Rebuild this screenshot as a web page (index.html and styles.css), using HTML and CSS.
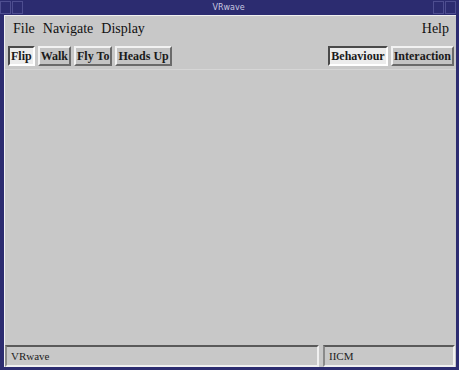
FILE: index.html
```html
<!DOCTYPE html>
<html lang="en">
<head>
    <meta charset="UTF-8">
    <title>VRwave</title>
    <link rel="stylesheet" href="styles.css">
</head>
<body>
    <div class="window">
        <div class="titlebar">
            <div class="tb-btns"><span class="tb-btn"></span><span class="tb-btn"></span></div>
            <span class="title">VRwave</span>
            <div class="tb-btns"><span class="tb-btn"></span><span class="tb-btn"></span></div>
        </div>
        <div class="client">
            <div class="menubar">
                <span class="menu">File</span>
                <span class="menu">Navigate</span>
                <span class="menu">Display</span>
                <span class="menu help">Help</span>
            </div>
            <div class="toolbar">
                <div class="group">
                    <button class="btn on">Flip</button>
                    <button class="btn">Walk</button>
                    <button class="btn">Fly To</button>
                    <button class="btn">Heads Up</button>
                </div>
                <div class="group">
                    <button class="btn on">Behaviour</button>
                    <button class="btn">Interaction</button>
                </div>
            </div>
            <div class="viewport"></div>
            <div class="statusbar">
                <div class="field wide">VRwave</div>
                <div class="field">IICM</div>
            </div>
        </div>
    </div>
</body>
</html>
```

FILE: styles.css
```css
body {
    margin: 0;
    background-color: #2c2c70;
    font-family: 'Liberation Serif', 'DejaVu Serif', serif;
}
.window {
    width: 459px;
    height: 370px;
    display: flex;
    flex-direction: column;
    box-sizing: border-box;
    padding: 0 3px 3px 4px;
    background-color: #2c2c70;
}
.titlebar {
    height: 14px;
    display: flex;
    align-items: center;
    justify-content: space-between;
    margin-left: -4px;
    margin-right: -1px;
}
.title {
    color: #c8c8e0;
    font-family: 'DejaVu Sans', sans-serif;
    font-size: 8px;
}
.tb-btns {
    display: flex;
}
.tb-btn {
    width: 9px;
    height: 11px;
    border: 1px solid #4e4e90;
    margin-right: 1px;
}
.client {
    flex: 1;
    display: flex;
    flex-direction: column;
    background-color: #c8c8c8;
    border-top: 1px solid #f0f0f0;
    border-left: 1px solid #f0f0f0;
    margin-top: 1px;
}
.menubar {
    height: 26px;
    display: flex;
    align-items: center;
    padding: 0 7px 0 8px;
    font-size: 14px;
    color: #111;
}
.menu {
    margin-right: 8px;
}
.help {
    margin-left: auto;
    margin-right: 0;
}
.toolbar {
    display: flex;
    justify-content: space-between;
    padding: 4px 2px 3px 3px;
    border-bottom: 1px solid #d6d6d6;
}
.group {
    display: flex;
    gap: 3px;
}
.btn {
    height: 20px;
    padding: 0 1px;
    font-family: 'Liberation Serif', serif;
    font-weight: bold;
    font-size: 12px;
    color: #1a1a1a;
    background-color: #c4c4c4;
    border: 2px solid;
    border-color: #f2f2f2 #6a6a6a #6a6a6a #f2f2f2;
}
.btn.on {
    background-color: #ececec;
    border-color: #4a4a4a #ffffff #ffffff #4a4a4a;
}
.viewport {
    flex: 1;
}
.statusbar {
    display: flex;
    gap: 4px;
    padding: 2px 1px 0 0;
}
.field {
    height: 22px;
    display: flex;
    align-items: center;
    padding-left: 4px;
    font-size: 11px;
    color: #222;
    border-top: 2px solid #5a5a5a;
    border-left: 2px solid #8a8a8a;
    border-right: 2px solid #f0f0f0;
    border-bottom: 2px solid #f0f0f0;
    box-sizing: border-box;
    width: 132px;
}
.field.wide {
    flex: 1;
}
```
